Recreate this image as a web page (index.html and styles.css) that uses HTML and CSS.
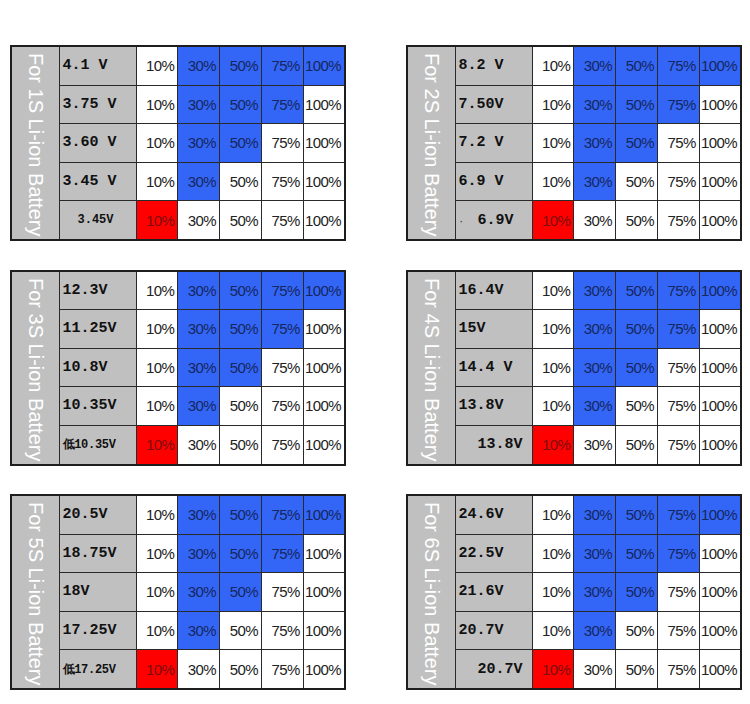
FILE: index.html
```html
<!DOCTYPE html>
<html>
<head>
<meta charset="utf-8">
<link rel="stylesheet" href="styles.css">
</head>
<body>
<div class="sheet">

<table class="chart">
<colgroup><col class="c-lab"><col class="c-volt"><col class="c-p"><col class="c-p"><col class="c-p"><col class="c-p"><col class="c-p"></colgroup>
<tr><td class="lab" rowspan="5"><div class="lab-text">For 1S Li-ion Battery</div></td><td class="volt">4.1 V</td><td>10%</td><td class="on">30%</td><td class="on">50%</td><td class="on">75%</td><td class="on">100%</td></tr>
<tr><td class="volt">3.75 V</td><td>10%</td><td class="on">30%</td><td class="on">50%</td><td class="on">75%</td><td>100%</td></tr>
<tr><td class="volt">3.60 V</td><td>10%</td><td class="on">30%</td><td class="on">50%</td><td>75%</td><td>100%</td></tr>
<tr><td class="volt">3.45 V</td><td>10%</td><td class="on">30%</td><td>50%</td><td>75%</td><td>100%</td></tr>
<tr><td class="volt low small">3.45V</td><td class="red">10%</td><td>30%</td><td>50%</td><td>75%</td><td>100%</td></tr>
</table>

<table class="chart">
<colgroup><col class="c-lab"><col class="c-volt"><col class="c-p"><col class="c-p"><col class="c-p"><col class="c-p"><col class="c-p"></colgroup>
<tr><td class="lab" rowspan="5"><div class="lab-text">For 2S Li-ion Battery</div></td><td class="volt">8.2 V</td><td>10%</td><td class="on">30%</td><td class="on">50%</td><td class="on">75%</td><td class="on">100%</td></tr>
<tr><td class="volt">7.50V</td><td>10%</td><td class="on">30%</td><td class="on">50%</td><td class="on">75%</td><td>100%</td></tr>
<tr><td class="volt">7.2 V</td><td>10%</td><td class="on">30%</td><td class="on">50%</td><td>75%</td><td>100%</td></tr>
<tr><td class="volt">6.9 V</td><td>10%</td><td class="on">30%</td><td>50%</td><td>75%</td><td>100%</td></tr>
<tr><td class="volt low"><span class="speck">·</span>6.9V</td><td class="red">10%</td><td>30%</td><td>50%</td><td>75%</td><td>100%</td></tr>
</table>

<table class="chart">
<colgroup><col class="c-lab"><col class="c-volt"><col class="c-p"><col class="c-p"><col class="c-p"><col class="c-p"><col class="c-p"></colgroup>
<tr><td class="lab" rowspan="5"><div class="lab-text">For 3S Li-ion Battery</div></td><td class="volt">12.3V</td><td>10%</td><td class="on">30%</td><td class="on">50%</td><td class="on">75%</td><td class="on">100%</td></tr>
<tr><td class="volt">11.25V</td><td>10%</td><td class="on">30%</td><td class="on">50%</td><td class="on">75%</td><td>100%</td></tr>
<tr><td class="volt">10.8V</td><td>10%</td><td class="on">30%</td><td class="on">50%</td><td>75%</td><td>100%</td></tr>
<tr><td class="volt">10.35V</td><td>10%</td><td class="on">30%</td><td>50%</td><td>75%</td><td>100%</td></tr>
<tr><td class="volt tiny">低10.35V</td><td class="red">10%</td><td>30%</td><td>50%</td><td>75%</td><td>100%</td></tr>
</table>

<table class="chart">
<colgroup><col class="c-lab"><col class="c-volt"><col class="c-p"><col class="c-p"><col class="c-p"><col class="c-p"><col class="c-p"></colgroup>
<tr><td class="lab" rowspan="5"><div class="lab-text">For 4S Li-ion Battery</div></td><td class="volt">16.4V</td><td>10%</td><td class="on">30%</td><td class="on">50%</td><td class="on">75%</td><td class="on">100%</td></tr>
<tr><td class="volt">15V</td><td>10%</td><td class="on">30%</td><td class="on">50%</td><td class="on">75%</td><td>100%</td></tr>
<tr><td class="volt">14.4 V</td><td>10%</td><td class="on">30%</td><td class="on">50%</td><td>75%</td><td>100%</td></tr>
<tr><td class="volt">13.8V</td><td>10%</td><td class="on">30%</td><td>50%</td><td>75%</td><td>100%</td></tr>
<tr><td class="volt low">13.8V</td><td class="red">10%</td><td>30%</td><td>50%</td><td>75%</td><td>100%</td></tr>
</table>

<table class="chart">
<colgroup><col class="c-lab"><col class="c-volt"><col class="c-p"><col class="c-p"><col class="c-p"><col class="c-p"><col class="c-p"></colgroup>
<tr><td class="lab" rowspan="5"><div class="lab-text">For 5S Li-ion Battery</div></td><td class="volt">20.5V</td><td>10%</td><td class="on">30%</td><td class="on">50%</td><td class="on">75%</td><td class="on">100%</td></tr>
<tr><td class="volt">18.75V</td><td>10%</td><td class="on">30%</td><td class="on">50%</td><td class="on">75%</td><td>100%</td></tr>
<tr><td class="volt">18V</td><td>10%</td><td class="on">30%</td><td class="on">50%</td><td>75%</td><td>100%</td></tr>
<tr><td class="volt">17.25V</td><td>10%</td><td class="on">30%</td><td>50%</td><td>75%</td><td>100%</td></tr>
<tr><td class="volt tiny">低17.25V</td><td class="red">10%</td><td>30%</td><td>50%</td><td>75%</td><td>100%</td></tr>
</table>

<table class="chart">
<colgroup><col class="c-lab"><col class="c-volt"><col class="c-p"><col class="c-p"><col class="c-p"><col class="c-p"><col class="c-p"></colgroup>
<tr><td class="lab" rowspan="5"><div class="lab-text">For 6S Li-ion Battery</div></td><td class="volt">24.6V</td><td>10%</td><td class="on">30%</td><td class="on">50%</td><td class="on">75%</td><td class="on">100%</td></tr>
<tr><td class="volt">22.5V</td><td>10%</td><td class="on">30%</td><td class="on">50%</td><td class="on">75%</td><td>100%</td></tr>
<tr><td class="volt">21.6V</td><td>10%</td><td class="on">30%</td><td class="on">50%</td><td>75%</td><td>100%</td></tr>
<tr><td class="volt">20.7V</td><td>10%</td><td class="on">30%</td><td>50%</td><td>75%</td><td>100%</td></tr>
<tr><td class="volt low">20.7V</td><td class="red">10%</td><td>30%</td><td>50%</td><td>75%</td><td>100%</td></tr>
</table>

</div>
</body>
</html>
```

FILE: styles.css
```css
html, body {
  margin: 0;
  padding: 0;
  background: #ffffff;
}

.sheet {
  display: grid;
  grid-template-columns: 334px 334px;
  column-gap: 62px;
  row-gap: 28.5px;
  padding: 45px 0 0 10px;
}

.chart {
  width: 334px;
  height: 196px;
  border-collapse: collapse;
  table-layout: fixed;
  border: 2px solid #1e1e1e;
  font-family: "Liberation Sans", Arial, sans-serif;
  font-size: 15px;
  color: #222;
}

.c-lab { width: 48px; }
.c-volt { width: 77px; }
.c-p { width: 41.8px; }

.chart td {
  border: 1px solid #2a2a2a;
  padding: 0 3px 0 0;
  text-align: right;
  vertical-align: middle;
  background: #ffffff;
  white-space: nowrap;
  overflow: hidden;
  letter-spacing: -0.6px;
  height: 30px;
}

.chart td.on {
  background: #3366f6;
  color: #16265e;
}

.chart td.red {
  background: #ff0000;
  color: #7a0e0e;
}

.chart td.lab {
  background: #c0c0c0;
  padding: 0;
  vertical-align: top;
  text-align: left;
  letter-spacing: 0;
}

.lab-text {
  writing-mode: vertical-rl;
  font-family: "Liberation Sans", Arial, sans-serif;
  font-size: 20px;
  color: #ffffff;
  margin: 6px auto 0;
  line-height: 48px;
  height: 180px;
  width: 48px;
  padding-left: 2px;
  box-sizing: border-box;
}

.chart td.volt {
  background: #c0c0c0;
  text-align: left;
  padding: 0 0 0 3px;
  font-family: "Liberation Mono", "Courier New", monospace;
  font-weight: bold;
  font-size: 15px;
  letter-spacing: 0;
  color: #111;
}

.chart td.volt.low {
  padding-left: 22px;
}

.chart td.volt.low.small {
  padding-left: 18px;
  font-size: 12px;
}

.chart td.volt.tiny {
  font-size: 12px;
  letter-spacing: -0.3px;
}

.speck {
  display: inline-block;
  width: 0;
  margin-left: -19px;
  margin-right: 19px;
  font-size: 9px;
  color: #444;
}
```
